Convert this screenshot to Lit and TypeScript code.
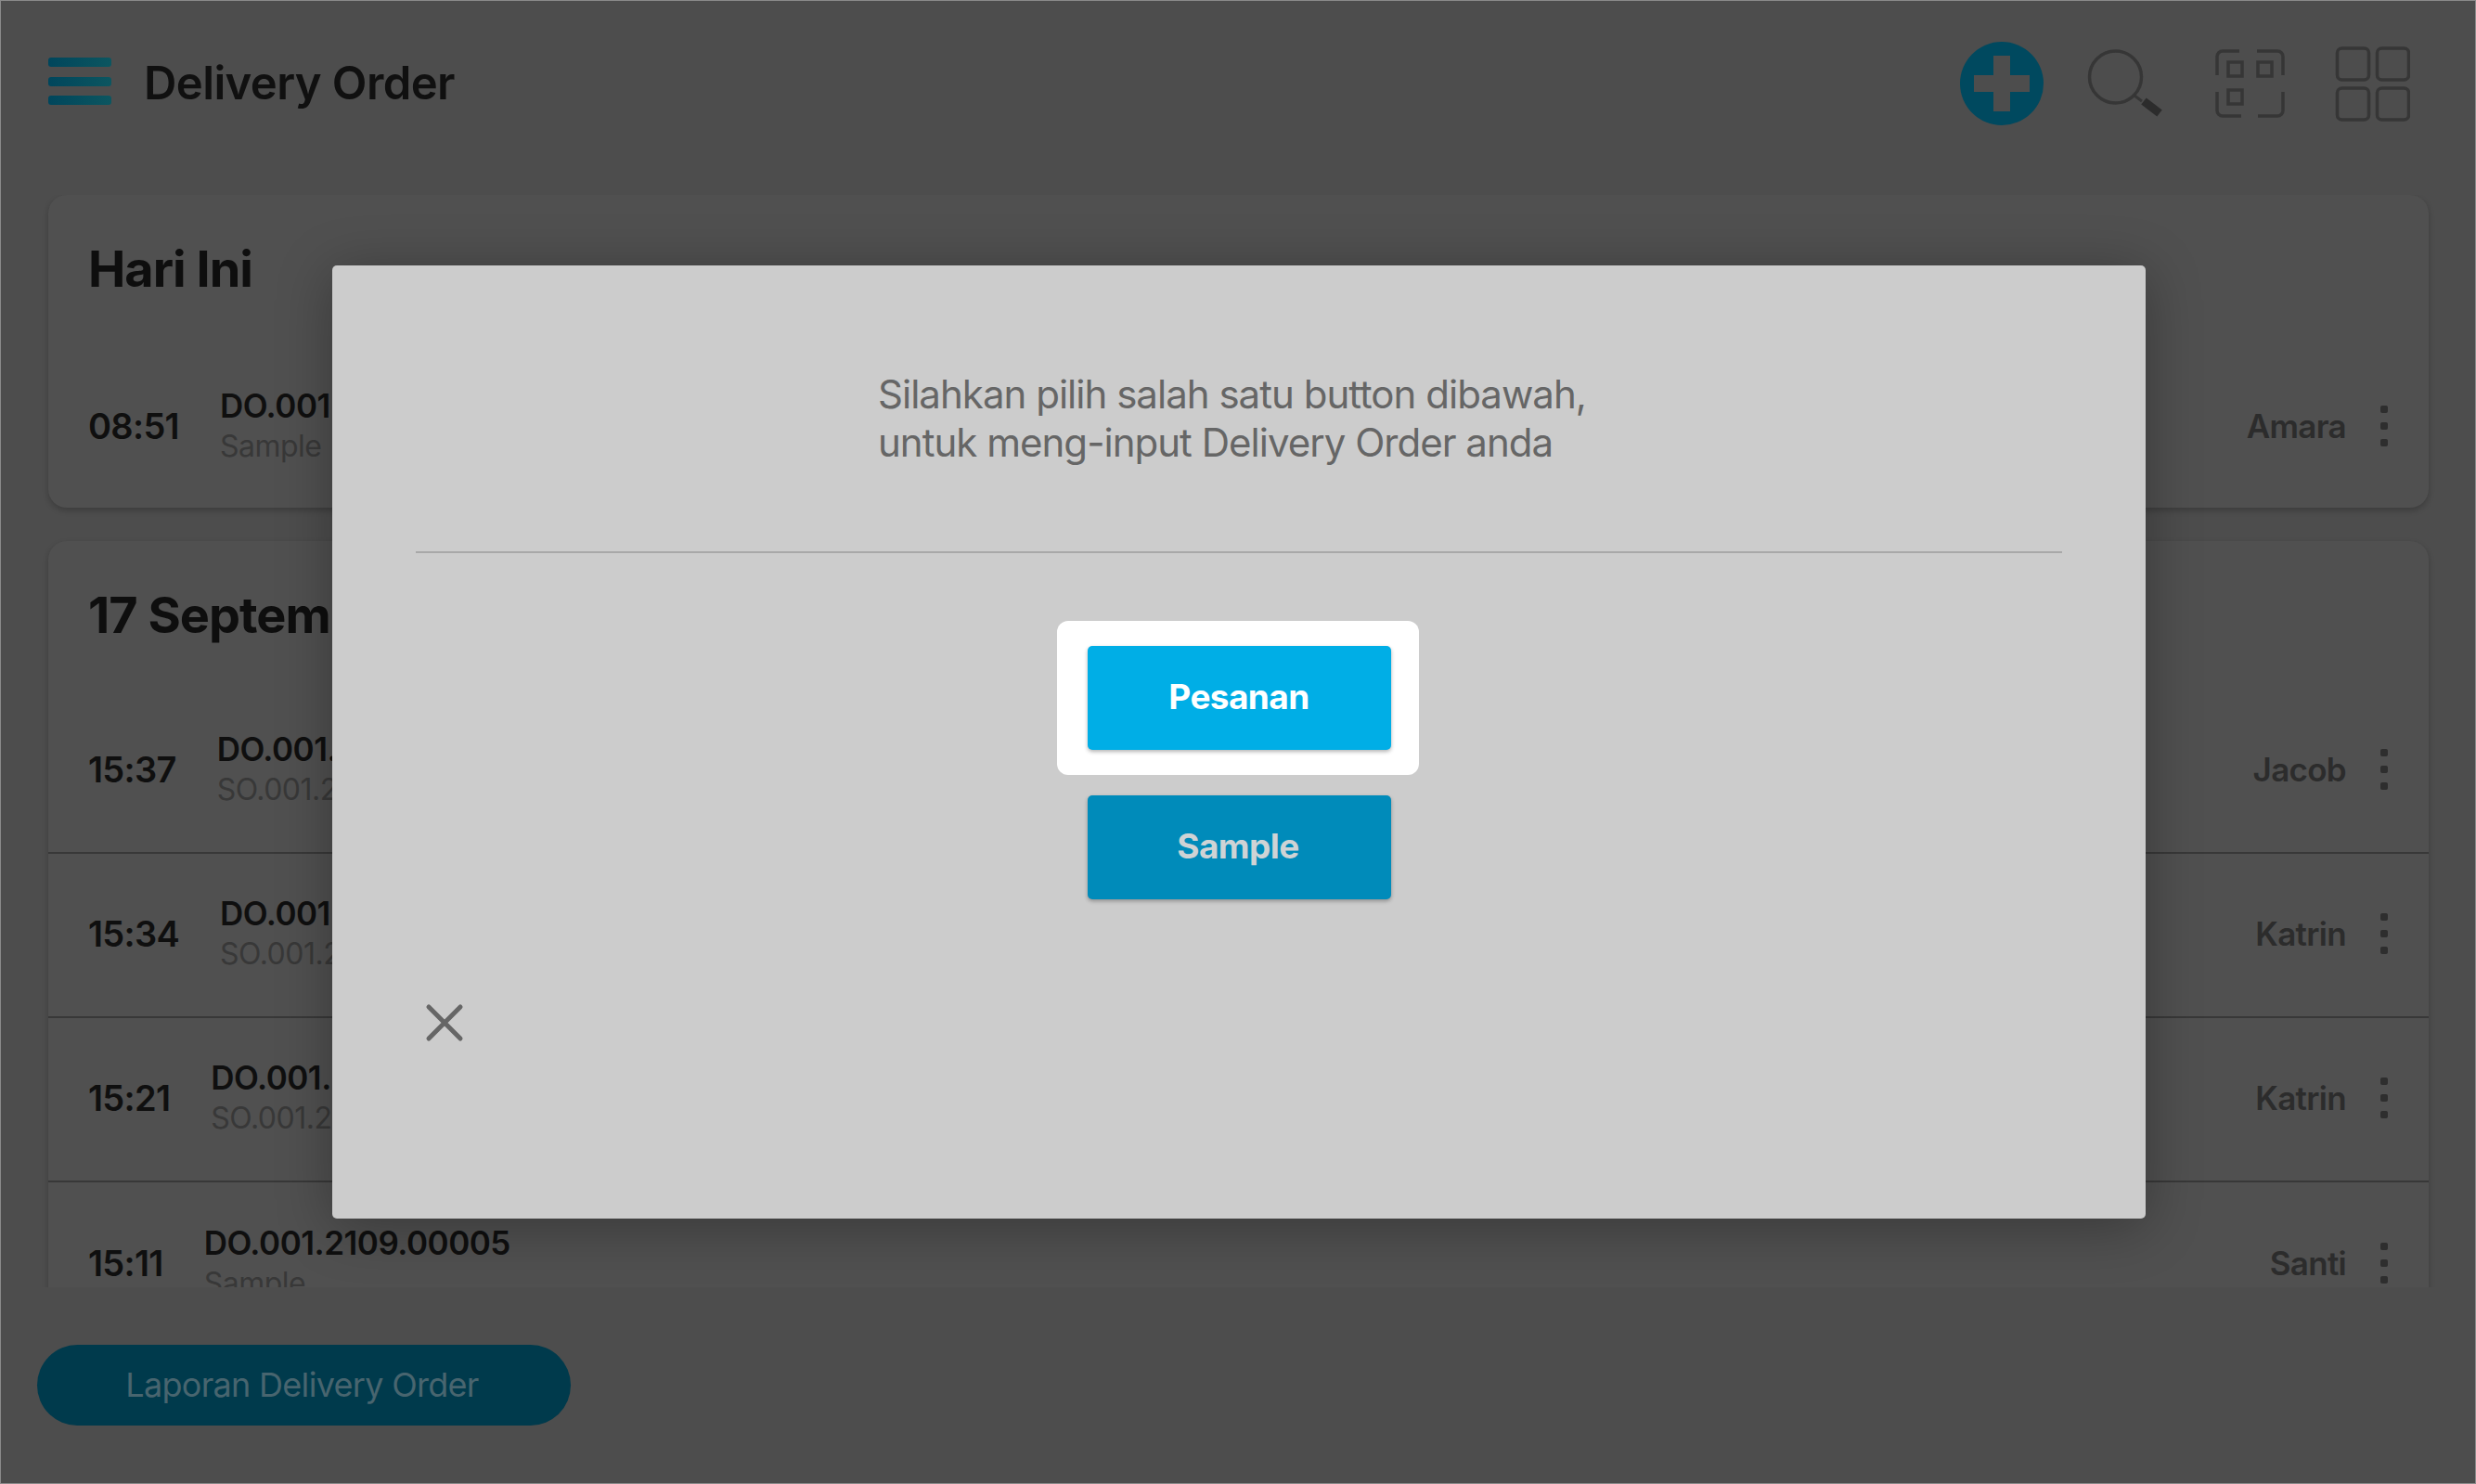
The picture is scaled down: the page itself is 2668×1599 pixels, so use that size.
import { LitElement, html, css, svg } from "lit";
import { customElement } from "lit/decorators.js";

type Row = { time: string; doc: string; sub: string; name: string };

const today: Row[] = [{ time: "08:51", doc: "DO.001.2109.00010", sub: "Sample", name: "Amara" }];
const sept: Row[] = [
  { time: "15:37", doc: "DO.001.2109.00008", sub: "SO.001.2109.00021", name: "Jacob" },
  { time: "15:34", doc: "DO.001.2109.00007", sub: "SO.001.2109.00020", name: "Katrin" },
  { time: "15:21", doc: "DO.001.2109.00006", sub: "SO.001.2109.00019", name: "Katrin" },
  { time: "15:11", doc: "DO.001.2109.00005", sub: "Sample", name: "Santi" },
];

@customElement("app-root")
export class AppRoot extends LitElement {
  static styles = css`
    :host {
      display: block;
      width: 2668px;
      height: 1599px;
      font-family: Inter, "Liberation Sans", sans-serif;
    }
    * { box-sizing: border-box; }
    .page {
      position: relative;
      width: 2668px;
      height: 1599px;
      background: #4d4d4d;
      border: 1px solid #8a8a8a;
      display: flex;
      flex-direction: column;
      overflow: hidden;
    }
    .header {
      height: 209px;
      flex: none;
      padding: 61px 70px 0 51px;
      display: flex;
      align-items: flex-start;
    }
    .burger {
      width: 68px;
      height: 51px;
      display: flex;
      flex-direction: column;
      justify-content: space-between;
      flex: none;
    }
    .burger i {
      display: block;
      height: 10px;
      border-radius: 3px;
      background: linear-gradient(90deg, #00465c, #0c5660);
    }
    .title {
      margin: 2px 0 0 35px;
      font-size: 49px;
      line-height: 52px;
      font-weight: 600;
      letter-spacing: -0.6px;
      color: #101010;
    }
    .tools {
      margin-left: auto;
      margin-top: -21px;
      display: flex;
      align-items: flex-start;
    }
    .tools svg { display: block; }
    .scroll {
      height: 1177px;
      flex: none;
      overflow: hidden;
      padding: 0 50px 0 51px;
      display: flex;
      flex-direction: column;
      gap: 36px;
    }
    .card {
      flex: none;
      background: #505050;
      border-radius: 20px;
      box-shadow: 0 3px 6px rgba(0, 0, 0, 0.22);
    }
    .card h2 {
      margin: 0;
      height: 160px;
      padding: 48px 0 0 43px;
      font-size: 54px;
      line-height: 64px;
      font-weight: 700;
      letter-spacing: -1px;
      color: #0e0e0e;
    }
    .row {
      height: 177px;
      padding: 0 44px 3px 43px;
      display: flex;
      align-items: center;
      border-bottom: 2px solid #383838;
    }
    .card:first-child .row { padding-bottom: 0; }
    .row:last-child { border-bottom: 0; }
    .time {
      font-size: 38px;
      font-weight: 600;
      letter-spacing: -0.7px;
      color: #0f0f0f;
      margin-right: 44px;
    }
    .doc {
      font-size: 35px;
      line-height: 42px;
      font-weight: 600;
      letter-spacing: -0.5px;
      color: #0f0f0f;
    }
    .sub {
      margin-top: 2px;
      font-size: 32px;
      line-height: 42px;
      letter-spacing: -0.5px;
      color: #383838;
    }
    .name {
      margin-left: auto;
      font-size: 35px;
      font-weight: 600;
      letter-spacing: -0.7px;
      color: #2c2c2c;
    }
    .kebab {
      margin-left: 37px;
      width: 8px;
      display: flex;
      flex-direction: column;
      gap: 10px;
    }
    .kebab i {
      width: 8px;
      height: 8px;
      border-radius: 2px;
      background: #2e2e2e;
    }
    .footer {
      padding: 62px 0 0 39px;
    }
    .report {
      width: 575px;
      height: 87px;
      border-radius: 44px;
      background: #003a4c;
      color: #48656f;
      font-size: 36px;
      letter-spacing: -0.7px;
      padding-right: 4px;
      padding-bottom: 2px;
      display: flex;
      align-items: center;
      justify-content: center;
    }
    .modal {
      position: absolute;
      left: 357px;
      top: 285px;
      width: 1954px;
      height: 1027px;
      background: #cccccc;
      border-radius: 5px;
      box-shadow: 0 8px 60px rgba(0, 0, 0, 0.3);
      padding: 0 90px;
      display: flex;
      flex-direction: column;
    }
    .msg {
      height: 310px;
      margin: 0;
      padding: 113px 0 0 498px;
      border-bottom: 2px solid #a8a8a8;
      font-size: 42px;
      line-height: 52px;
      letter-spacing: -0.98px;
      color: #666666;
      flex: none;
    }
    .actions {
      margin-top: 73px;
      display: flex;
      flex-direction: column;
      align-items: center;
    }
    .focus {
      width: 390px;
      height: 166px;
      margin-left: -2px;
      padding-left: 2px;
      background: #ffffff;
      border-radius: 12px;
      display: flex;
      align-items: center;
      justify-content: center;
    }
    .btn {
      width: 327px;
      height: 112px;
      border-radius: 5px;
      display: flex;
      align-items: center;
      justify-content: center;
      font-size: 37px;
      font-weight: 700;
      letter-spacing: -0.6px;
      box-shadow: 0 2px 4px rgba(0, 0, 0, 0.3);
    }
    .btn.on { background: #00aee6; color: #ffffff; padding-bottom: 4px; }
    .btn.off { background: #008bba; color: #cfd3d5; margin-top: 22px; padding: 0 2px 4px 0; }
    .close {
      position: absolute;
      left: 99px;
      top: 794px;
      display: block;
    }
  `;

  private rowTpl(r: Row) {
    return html`<div class="row">
      <div class="time">${r.time}</div>
      <div>
        <div class="doc">${r.doc}</div>
        <div class="sub">${r.sub}</div>
      </div>
      <div class="name">${r.name}</div>
      <div class="kebab"><i></i><i></i><i></i></div>
    </div>`;
  }

  private tools() {
    const c = "#363636";
    return html`<svg width="497" height="100" viewBox="2100 40 497 100">
      ${svg`
        <ellipse cx="2157" cy="89" rx="45" ry="45" fill="#00495f" />
        <path d="M2148 59h18v21h21v18h-21v21h-18v-21h-21v-18h21z" fill="#4d4d4d" />
        <circle cx="2279.5" cy="82" r="28" fill="none" stroke="${c}" stroke-width="3.5" />
        <path d="M2300 102l8 6" stroke="${c}" stroke-width="3" />
        <path d="M2310 108l17 13" stroke="#2c2c2c" stroke-width="9" />
        <g fill="none" stroke="${c}" stroke-width="3.5">
          <path d="M2389 80v-20a6 6 0 0 1 6-6h18" />
          <path d="M2432 54h22a6 6 0 0 1 6 6v20" />
          <path d="M2389 98v20a6 6 0 0 0 6 6h20" />
          <path d="M2433 124h21a6 6 0 0 0 6-6v-20" />
          <rect x="2401" y="66" width="15" height="15" />
          <rect x="2433" y="66" width="15" height="15" />
          <rect x="2401" y="96" width="15" height="15" />
          <rect x="2518.5" y="51" width="34" height="34" rx="5" />
          <rect x="2561.5" y="51" width="34" height="34" rx="5" />
          <rect x="2518.5" y="94" width="34" height="34" rx="5" />
          <rect x="2561.5" y="94" width="34" height="34" rx="5" />
        </g>
      `}
    </svg>`;
  }

  render() {
    return html`<div class="page">
      <div class="header">
        <div class="burger"><i></i><i></i><i></i></div>
        <div class="title">Delivery Order</div>
        <div class="tools">${this.tools()}</div>
      </div>
      <div class="scroll">
        <section class="card"><h2>Hari Ini</h2>${today.map((r) => this.rowTpl(r))}</section>
        <section class="card"><h2>17 September 2021</h2>${sept.map((r) => this.rowTpl(r))}</section>
      </div>
      <div class="footer"><div class="report">Laporan Delivery Order</div></div>
      <div class="modal">
        <p class="msg">Silahkan pilih salah satu button dibawah,<br />untuk meng-input Delivery Order anda</p>
        <div class="actions">
          <div class="focus"><div class="btn on">Pesanan</div></div>
          <div class="btn off">Sample</div>
        </div>
        <svg class="close" width="44" height="44" viewBox="0 0 44 44">
          <path d="M5 5l34 34M39 5L5 39" stroke="#666666" stroke-width="5" stroke-linecap="round" />
        </svg>
      </div>
    </div>`;
  }
}
